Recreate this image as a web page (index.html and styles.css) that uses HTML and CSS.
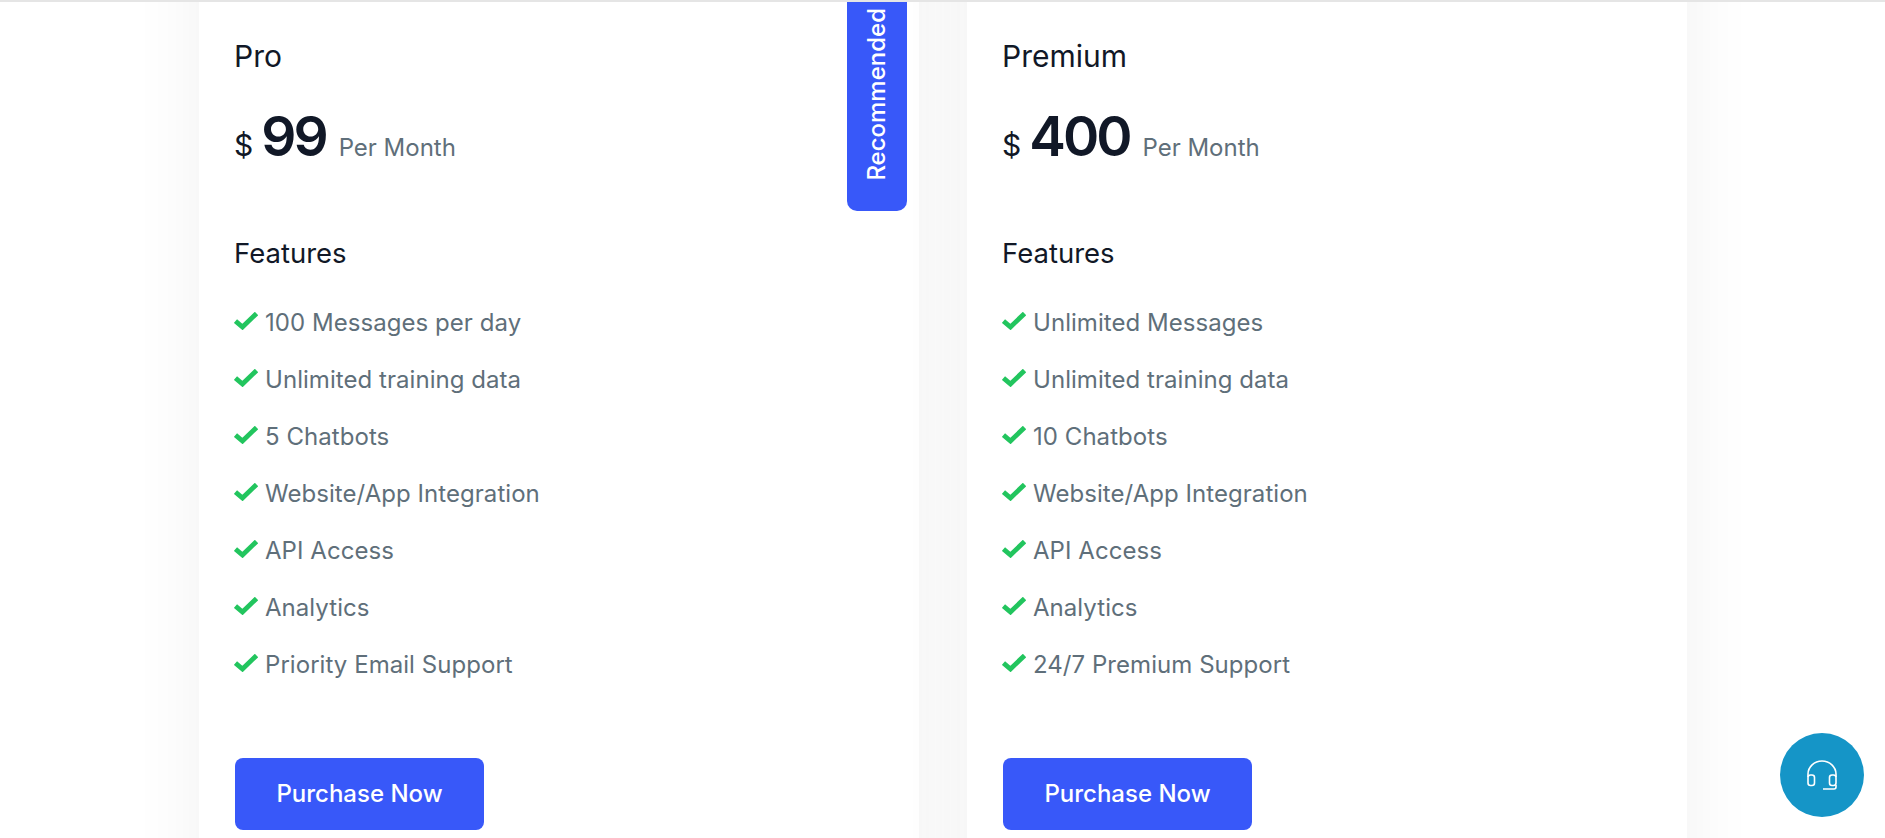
FILE: index.html
```html
<!DOCTYPE html>
<html lang="en">
<head>
    <meta charset="UTF-8">
    <meta name="viewport" content="width=device-width, initial-scale=1.0">
    <title>Pricing</title>
    <link rel="stylesheet" href="styles.css">
</head>
<body>
    <div class="page">
        <div class="pricing">
            <div class="card">
                <div class="ribbon"><span>Recommended</span></div>
                <h3 class="plan">Pro</h3>
                <div class="price"><span class="currency">$</span><span class="amount">99</span><span class="period">Per Month</span></div>
                <h4 class="features-title">Features</h4>
                <ul class="features">
                    <li><svg class="check" viewBox="0 0 24 18"><path d="M1.5 9L8.5 15 22.5 1.5"/></svg>100 Messages per day</li>
                    <li><svg class="check" viewBox="0 0 24 18"><path d="M1.5 9L8.5 15 22.5 1.5"/></svg>Unlimited training data</li>
                    <li><svg class="check" viewBox="0 0 24 18"><path d="M1.5 9L8.5 15 22.5 1.5"/></svg>5 Chatbots</li>
                    <li><svg class="check" viewBox="0 0 24 18"><path d="M1.5 9L8.5 15 22.5 1.5"/></svg>Website/App Integration</li>
                    <li><svg class="check" viewBox="0 0 24 18"><path d="M1.5 9L8.5 15 22.5 1.5"/></svg>API Access</li>
                    <li><svg class="check" viewBox="0 0 24 18"><path d="M1.5 9L8.5 15 22.5 1.5"/></svg>Analytics</li>
                    <li><svg class="check" viewBox="0 0 24 18"><path d="M1.5 9L8.5 15 22.5 1.5"/></svg>Priority Email Support</li>
                </ul>
                <a class="btn" href="#">Purchase Now</a>
            </div>
            <div class="card">
                <h3 class="plan">Premium</h3>
                <div class="price"><span class="currency">$</span><span class="amount">400</span><span class="period">Per Month</span></div>
                <h4 class="features-title">Features</h4>
                <ul class="features">
                    <li><svg class="check" viewBox="0 0 24 18"><path d="M1.5 9L8.5 15 22.5 1.5"/></svg>Unlimited Messages</li>
                    <li><svg class="check" viewBox="0 0 24 18"><path d="M1.5 9L8.5 15 22.5 1.5"/></svg>Unlimited training data</li>
                    <li><svg class="check" viewBox="0 0 24 18"><path d="M1.5 9L8.5 15 22.5 1.5"/></svg>10 Chatbots</li>
                    <li><svg class="check" viewBox="0 0 24 18"><path d="M1.5 9L8.5 15 22.5 1.5"/></svg>Website/App Integration</li>
                    <li><svg class="check" viewBox="0 0 24 18"><path d="M1.5 9L8.5 15 22.5 1.5"/></svg>API Access</li>
                    <li><svg class="check" viewBox="0 0 24 18"><path d="M1.5 9L8.5 15 22.5 1.5"/></svg>Analytics</li>
                    <li><svg class="check" viewBox="0 0 24 18"><path d="M1.5 9L8.5 15 22.5 1.5"/></svg>24/7 Premium Support</li>
                </ul>
                <a class="btn" href="#">Purchase Now</a>
            </div>
        </div>
    </div>
    <a class="support" href="#" aria-label="Support">
        <svg viewBox="0 0 30 30"><path d="M1 17v-3a14 13 0 0 1 28 0v3"/><rect x="1" y="15" width="6.5" height="10.5" rx="2.5"/><rect x="22.5" y="15" width="6.5" height="10.5" rx="2.5"/><path d="M29 25v2a2 2 0 0 1-2 2H16"/></svg>
    </a>
</body>
</html>
```

FILE: styles.css
```css
body {
    margin: 0;
    background-color: #fff;
    font-family: Inter, sans-serif;
    color: #111827;
    border-top: 2px solid #e5e5e5;
}
/* the page is scrolled: cards start above the fold */
.page {
    height: 836px;
    overflow: hidden;
}
.pricing {
    display: flex;
    gap: 48px;
    margin-top: -100px;
    padding-left: 199px;
}
.card {
    position: relative;
    width: 720px;
    box-sizing: border-box;
    height: 1100px;
    padding: 136px 35px 0;
    background-color: #fff;
    box-shadow: 0 0 70px rgba(0, 0, 0, 0.06);
}
.ribbon {
    position: absolute;
    top: 0;
    right: 12px;
    width: 60px;
    height: 309px;
    box-sizing: border-box;
    padding-bottom: 30px;
    background-color: #3858f9;
    border-radius: 0 0 10px 10px;
    display: flex;
    align-items: flex-end;
    justify-content: center;
}
.ribbon span {
    writing-mode: vertical-rl;
    transform: rotate(180deg);
    color: #fff;
    font-size: 24px;
    font-weight: 500;
    line-height: 30px;
}
.plan {
    margin: 0;
    font-size: 30px;
    line-height: 36px;
    font-weight: 400;
}
.price {
    margin-top: 26px;
    line-height: 72px;
}
.currency {
    font-size: 30px;
    margin-right: 8px;
}
.amount {
    font-size: 55px;
    font-weight: 600;
    letter-spacing: -3px;
}
.period {
    margin-left: 13px;
    font-size: 24px;
    color: #5f6f7a;
}
.features-title {
    margin: 49px 0 0;
    font-size: 27.5px;
    line-height: 36px;
    font-weight: 400;
}
.features {
    list-style: none;
    margin: 23px 0 0;
    padding: 0;
}
.features li {
    display: flex;
    align-items: center;
    height: 57px;
    font-size: 24px;
    letter-spacing: 0.05px;
    color: #5f6f7a;
}
.check {
    flex: none;
    width: 24px;
    height: 18px;
    margin: 0 7px 3px 0;
    fill: none;
    stroke: #22c55e;
    stroke-width: 4.8;
}
.btn {
    display: flex;
    align-items: center;
    justify-content: center;
    width: 249px;
    height: 72px;
    box-sizing: border-box;
    padding-bottom: 2px;
    margin: 65px 0 0 1px;
    background-color: #3858f9;
    border-radius: 8px;
    color: #fff;
    font-size: 24px;
    font-weight: 500;
    text-decoration: none;
}
.support {
    position: fixed;
    right: 21px;
    bottom: 21px;
    width: 84px;
    height: 84px;
    border-radius: 50%;
    background-color: #1595c7;
    display: flex;
    align-items: center;
    justify-content: center;
}
.support svg {
    width: 30px;
    height: 30px;
    fill: none;
    stroke: #fff;
    stroke-width: 1.6;
}
```
